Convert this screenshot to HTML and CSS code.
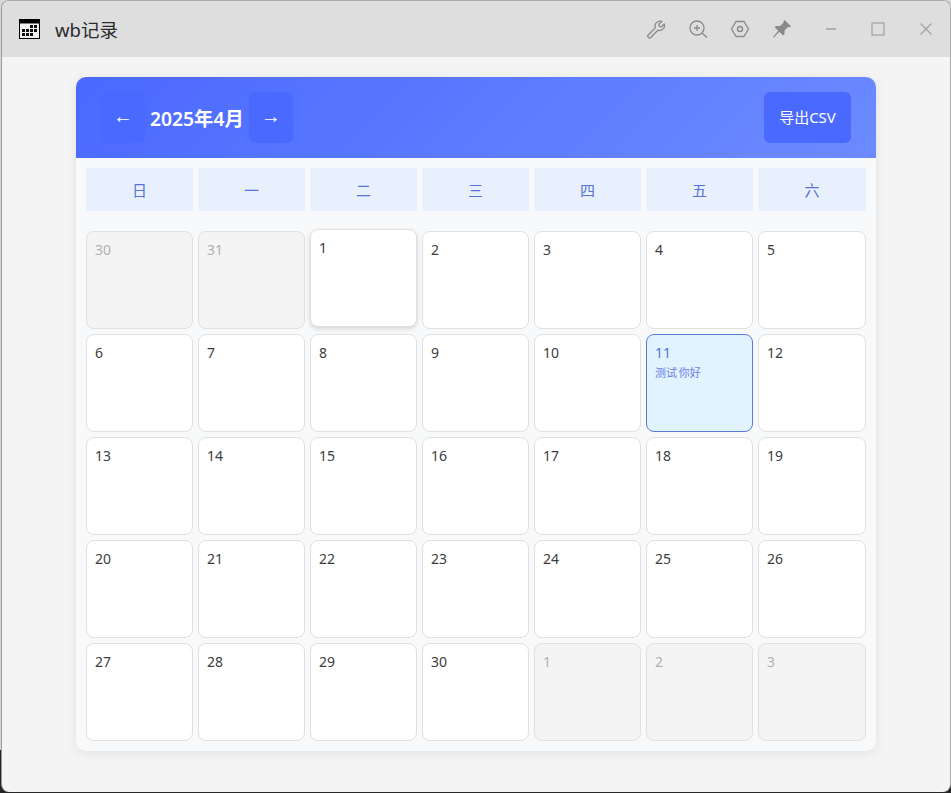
FILE: index.html
```html
<!DOCTYPE html>
<html lang="zh-CN">
<head>
  <meta charset="UTF-8">
  <title>wb记录</title>
  <link rel="stylesheet" href="styles.css">
</head>
<body>
  <div class="window">
    <div class="titlebar">
      <svg class="app-icon" width="21" height="20" viewBox="0 0 21 20">
        <rect x="0.5" y="0.5" width="20" height="19" fill="#f4f4f4" stroke="#000"/>
        <rect x="0" y="0" width="21" height="4.500" fill="#000"/>
        <path fill="#111" d="M11 6h3v3h-3zM15 6h3v3h-3zM3 10h3v3H3zM7 10h3v3H7zM11 10h3v3h-3zM15 10h3v3h-3zM3 14h3v3H3zM7 14h3v3H7zM11 14h3v3h-3z"/>
      </svg>
      <span class="app-name">wb记录</span>
      <div class="tools">
        <!-- wrench -->
        <svg class="tool" width="20" height="20" viewBox="0 0 20 20" fill="none" stroke="#8a8a8a" stroke-width="1.3" stroke-linejoin="round">
          <path d="M2 16.2 9.3 8.900C8.500 6.200 9.600 3.600 12.200 2.500 13.400 2 14.700 2 15.900 2.400L12.900 5.300 13.300 7.400 15.400 7.800 18.200 5C18.700 6.400 18.600 7.800 17.900 9 16.700 11 14.400 11.900 11.900 11.200L4.700 18.500C4.100 19.100 3.200 19 2.500 18.400L2 17.900C1.500 17.400 1.500 16.700 2 16.200Z"/>
        </svg>
        <!-- zoom in -->
        <svg class="tool" width="20" height="20" viewBox="0 0 20 20" fill="none" stroke="#8a8a8a" stroke-width="1.3">
          <circle cx="9" cy="9" r="7"/>
          <path d="M14 14l5 4.500M9 6v6M6 9h6"/>
        </svg>
        <!-- nut -->
        <svg class="tool" width="20" height="20" viewBox="0 0 20 20" fill="none" stroke="#8a8a8a" stroke-width="1.4" stroke-linejoin="round">
          <path d="M6 2.500h8l4.500 7.500-4.500 7.500H6L1.500 10z"/>
          <circle cx="10" cy="10" r="2.500"/>
        </svg>
        <!-- pin -->
        <svg class="tool" width="20" height="20" viewBox="0 0 20 20">
          <path fill="#8a8a8a" d="M12.600 1 19 7.300 17.800 8.200 16.300 7.800 12.700 11.300 12.500 15.300 11 16.600 7.300 12.800 2 18.500 1 18 6.200 11.700 2.700 8.200 4 7 8.200 6.900 11.800 3.300 11.500 2z"/>
        </svg>
      </div>
      <div class="win-btns">
        <svg width="12" height="12" viewBox="0 0 12 12"><path d="M1 6h10" stroke="#a0a0a0" stroke-width="1.300"/></svg>
        <svg width="14" height="14" viewBox="0 0 14 14"><rect x="1" y="1" width="12" height="12" fill="none" stroke="#a0a0a0" stroke-width="1.200"/></svg>
        <svg width="14" height="14" viewBox="0 0 14 14"><path d="M1.500 1.500l11 11M12.500 1.500l-11 11" stroke="#a0a0a0" stroke-width="1.100"/></svg>
      </div>
    </div>

    <div class="content">
      <div class="calendar">
        <div class="cal-header">
          <div class="month-nav">
            <button class="nav-btn">←</button>
            <span class="month">2025年4月</span>
            <button class="nav-btn">→</button>
          </div>
          <button class="export-btn">导出CSV</button>
        </div>

        <div class="weekdays">
          <div class="weekday">日</div>
          <div class="weekday">一</div>
          <div class="weekday">二</div>
          <div class="weekday">三</div>
          <div class="weekday">四</div>
          <div class="weekday">五</div>
          <div class="weekday">六</div>
        </div>

        <div class="days">
          <div class="day other">30</div>
          <div class="day other">31</div>
          <div class="day hover">1</div>
          <div class="day">2</div>
          <div class="day">3</div>
          <div class="day">4</div>
          <div class="day">5</div>
          <div class="day">6</div>
          <div class="day">7</div>
          <div class="day">8</div>
          <div class="day">9</div>
          <div class="day">10</div>
          <div class="day today">11<div class="note">测试 你好</div></div>
          <div class="day">12</div>
          <div class="day">13</div>
          <div class="day">14</div>
          <div class="day">15</div>
          <div class="day">16</div>
          <div class="day">17</div>
          <div class="day">18</div>
          <div class="day">19</div>
          <div class="day">20</div>
          <div class="day">21</div>
          <div class="day">22</div>
          <div class="day">23</div>
          <div class="day">24</div>
          <div class="day">25</div>
          <div class="day">26</div>
          <div class="day">27</div>
          <div class="day">28</div>
          <div class="day">29</div>
          <div class="day">30</div>
          <div class="day other">1</div>
          <div class="day other">2</div>
          <div class="day other">3</div>
        </div>
      </div>
    </div>
  </div>
</body>
</html>
```

FILE: styles.css
```css
html, body {
  margin: 0;
  height: 793px;
  overflow: hidden;
}

body {
  background: linear-gradient(#d8d8d8 750px, #262626 750px);
  font-family: "Noto Sans", "Noto Sans CJK SC", sans-serif;
}

.window {
  box-sizing: border-box;
  width: 950px;
  height: 792px;
  margin-left: 1px;
  background: #f4f4f4;
  border: 1px solid #a9a9a9;
  border-bottom: 0;
  border-left-color: #9a9a9a;
  border-radius: 8px;
  overflow: hidden;
  display: flex;
  flex-direction: column;
}

.titlebar {
  height: 56px;
  flex: none;
  display: flex;
  align-items: center;
  background: #dedede;
  padding-left: 17px;
}

.app-name {
  margin-left: 15px;
  font-size: 18.5px;
  color: #2a2a2a;
}

.tools {
  margin-left: auto;
  display: flex;
  gap: 22px;
}

.win-btns {
  display: flex;
  align-items: center;
  gap: 34px;
  margin-left: 33px;
  margin-right: 17px;
}

.content {
  flex: 1;
  padding: 20px 0 0 74px;
}

.calendar {
  width: 800px;
  height: 674px;
  background: #f8f9fb;
  border-radius: 10px;
  overflow: hidden;
  box-shadow: 0 2px 12px rgba(0, 0, 0, 0.08);
}

.cal-header {
  height: 81px;
  box-sizing: border-box;
  padding: 15px 25px;
  display: flex;
  justify-content: space-between;
  background: linear-gradient(135deg, #4a69ff, #6c8bff);
}

.month-nav {
  display: flex;
  align-items: center;
  gap: 5px;
}

.nav-btn, .export-btn {
  height: 51px;
  border: 0;
  border-radius: 6px;
  background: #4a69ff;
  color: #fff;
  padding: 0 0 2px;
}

.nav-btn {
  width: 44px;
  font-family: "Liberation Sans", sans-serif;
  font-size: 20px;
}

.export-btn {
  width: 87px;
  font-family: inherit;
  font-size: 15px;
}

.month {
  font-size: 19.3px;
  font-weight: 600;
  color: #fff;
}

.weekdays, .days {
  display: grid;
  grid-template-columns: repeat(6, 107px) 1fr;
  gap: 5px;
  padding: 0 10px;
}

.weekdays {
  margin-top: 10px;
}

.weekday {
  height: 43px;
  display: flex;
  align-items: center;
  justify-content: center;
  background: #e8f0fe;
  color: #5872d8;
  font-size: 15px;
}

.days {
  margin-top: 20px;
  grid-auto-rows: 98px;
}

.day {
  box-sizing: border-box;
  padding: 8px;
  background: #fff;
  border: 1px solid #e0e0e0;
  border-radius: 8px;
  font-size: 14px;
  line-height: 20px;
  color: #3d3d3d;
}

.day.other {
  background: #f4f4f4;
  color: #b0b0b0;
}

.day.hover {
  transform: translateY(-2px);
  box-shadow: 0 2px 5px rgba(0, 0, 0, 0.15);
}

.day.today {
  background: #e0f3ff;
  border-color: #5c7bd9;
  color: #5872d8;
}

.note {
  font-size: 11px;
  line-height: 15px;
  margin-top: 2px;
  word-spacing: -1px;
  color: #6a80e4;
}
```
